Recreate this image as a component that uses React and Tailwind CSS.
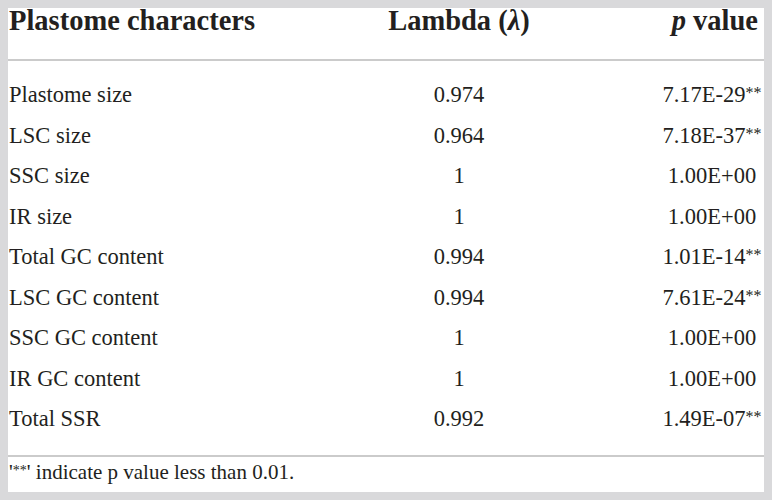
import React from 'react';

const rows = [
  { name: 'Plastome size', lambda: '0.974', p: '7.17E-29', sig: true },
  { name: 'LSC size', lambda: '0.964', p: '7.18E-37', sig: true },
  { name: 'SSC size', lambda: '1', p: '1.00E+00' },
  { name: 'IR size', lambda: '1', p: '1.00E+00' },
  { name: 'Total GC content', lambda: '0.994', p: '1.01E-14', sig: true },
  { name: 'LSC GC content', lambda: '0.994', p: '7.61E-24', sig: true },
  { name: 'SSC GC content', lambda: '1', p: '1.00E+00' },
  { name: 'IR GC content', lambda: '1', p: '1.00E+00' },
  { name: 'Total SSR', lambda: '0.992', p: '1.49E-07', sig: true },
];

export default function App() {
  return (
    <div className="h-[500px] w-[772px] bg-[#d9d9db] p-2 font-['Liberation_Serif',serif] text-[#231f20]">
      <div className="flex h-full flex-col bg-white">
        <div className="grid h-[51px] grid-cols-[250px_402px_1fr] whitespace-nowrap text-[28.5px] font-bold leading-[26px]">
          <div className="pl-px">Plastome characters</div>
          <div className="text-center">
            Lambda (<i>λ</i>)
          </div>
          <div className="pr-[6px] text-right">
            <i>p</i> value
          </div>
        </div>
        <div className="h-[2px] bg-[#cbcbcb]" />

        <div className="pt-[14px] pb-[15px]">
          {rows.map((r) => (
            <div key={r.name} className="grid h-[40.5px] grid-cols-[250px_402px_1fr] items-center text-[22.5px]">
              <div className="pl-px">{r.name}</div>
              <div className="text-center">{r.lambda}</div>
              <div className="text-center whitespace-nowrap">
                {r.p}
                {r.sig && <span className="relative -top-[4px] text-[16px]">**</span>}
              </div>
            </div>
          ))}
        </div>

        <div className="h-[2px] bg-[#cbcbcb]" />
        <div className="pl-px pt-[2px] text-[21px] leading-[26px]">
          '<span className="relative -top-[4px] text-[14px]">**</span>' indicate p value less than 0.01.
        </div>
      </div>
    </div>
  );
}
